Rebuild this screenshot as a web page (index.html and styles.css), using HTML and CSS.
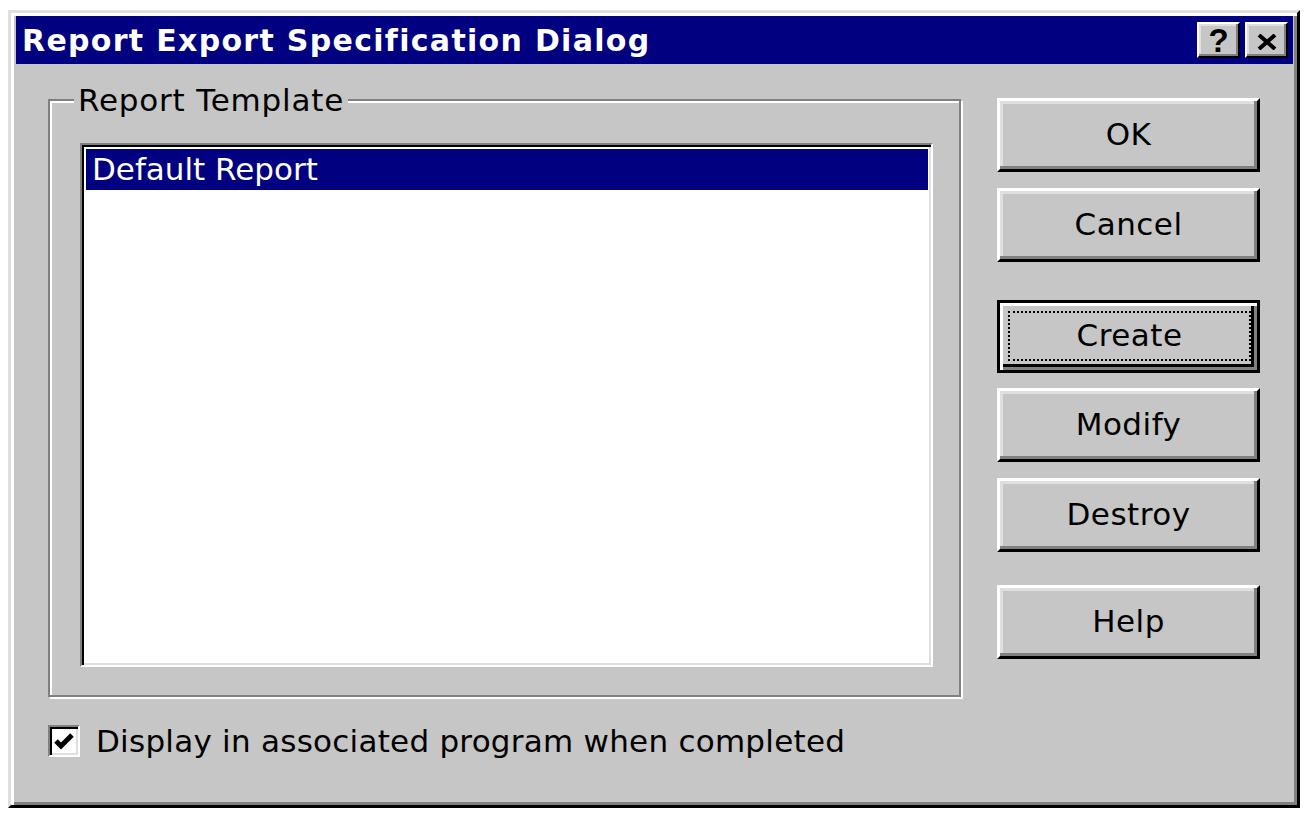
FILE: index.html
```html
<!DOCTYPE html>
<html>
<head>
<meta charset="utf-8">
<title>Report Export Specification Dialog</title>
<link rel="stylesheet" href="styles.css">
</head>
<body>
<div class="window">
  <div class="titlebar">
    <span class="title">Report Export Specification Dialog</span>
    <div class="title-buttons">
      <button class="tbtn help-btn">?</button>
      <button class="tbtn close-btn"><svg width="20" height="16" viewBox="0 0 20 16"><path d="M2 1 L18 15 M18 1 L2 15" stroke="#000" stroke-width="4" fill="none"/></svg></button>
    </div>
  </div>
  <div class="body">
    <div class="left-col">
      <fieldset class="group">
        <legend class="group-label">Report Template</legend>
        <div class="listbox">
          <div class="list-item selected">Default Report</div>
        </div>
      </fieldset>
      <label class="check-row">
        <span class="checkbox"><svg width="22" height="20" viewBox="0 0 22 20"><path d="M3 9 L8 14 L19 3" stroke="#000" stroke-width="5" fill="none"/></svg></span>
        <span class="check-label">Display in associated program when completed</span>
      </label>
    </div>
    <div class="right-col">
      <button class="btn btn-ok">OK</button>
      <button class="btn btn-cancel">Cancel</button>
      <button class="btn btn-default btn-create"><span class="focus">Create</span></button>
      <button class="btn btn-modify">Modify</button>
      <button class="btn btn-destroy">Destroy</button>
      <button class="btn btn-help">Help</button>
    </div>
  </div>
</div>
</body>
</html>
```

FILE: styles.css
```css
* { box-sizing: border-box; }
html, body { margin: 0; padding: 0; background: #ffffff; }
body {
  font-family: "DejaVu Sans", "Liberation Sans", sans-serif;
  width: 1311px;
  height: 818px;
  overflow: hidden;
}
.window {
  margin: 10px 0 0 8px;
  width: 1292px;
  height: 798px;
  background: #c6c6c6;
  border: 3px solid;
  border-color: #dfdfdf #000 #000 #dfdfdf;
  box-shadow: inset 3px 3px 0 #fff, inset -3px -3px 0 #808080;
  padding: 3px 4px 0 5px;
  display: flex;
  flex-direction: column;
}
.titlebar {
  height: 48px;
  background: #000080;
  display: flex;
  align-items: center;
  justify-content: space-between;
  padding: 0 5px 0 6px;
}
.title {
  color: #fff;
  font-weight: bold;
  font-size: 30px;
  letter-spacing: 1.3px;
}
.title-buttons { display: flex; gap: 5px; }
.tbtn {
  width: 43px;
  height: 36px;
  background: #c6c6c6;
  border: 2px solid;
  border-color: #fff #000 #000 #fff;
  box-shadow: inset -2px -2px 0 #808080, inset 2px 2px 0 #dfdfdf;
  padding: 0;
  margin: 0;
  display: flex;
  align-items: center;
  justify-content: center;
  font-family: "Liberation Sans", Arial, sans-serif;
  font-weight: bold;
  font-size: 33px;
  color: #000;
}
.help-btn { padding-top: 2px; }
.close-btn { padding-top: 4px; }
.body {
  flex: 1;
  display: flex;
  padding: 17px 0 0 32px;
}
.left-col {
  display: flex;
  flex-direction: column;
}
.group {
  margin: 0;
  width: 913px;
  border: 2px solid #808080;
  box-shadow: inset 2px 2px 0 #fff, 2px 2px 0 #fff;
  padding: 24px 26px 28px 30px;
}
.group-label {
  margin-left: -6px;
  padding: 0 4px 0 4px;
  font-size: 31px;
  line-height: 38px;
  letter-spacing: 0.8px;
  color: #000;
  background: #c6c6c6;
}
.listbox {
  width: 853px;
  height: 524px;
  background: #fff;
  border: 2px solid;
  border-color: #808080 #fff #fff #808080;
  box-shadow: inset 2px 2px 0 #000, inset -2px -2px 0 #dfdfdf;
  padding: 4px 3px 0 4px;
}
.list-item {
  height: 41px;
  font-size: 31px;
  line-height: 41px;
  padding-left: 6px;
  color: #000;
}
.list-item.selected {
  background: #000080;
  color: #fff;
}
.check-row {
  display: flex;
  align-items: center;
  margin-top: 26px;
  gap: 16px;
}
.checkbox {
  width: 32px;
  height: 32px;
  background: #fff;
  border: 2px solid;
  border-color: #808080 #fff #fff #808080;
  box-shadow: inset 2px 2px 0 #000, inset -2px -2px 0 #dfdfdf;
  display: flex;
  align-items: center;
  justify-content: center;
  padding-top: 1px;
}
.check-label {
  font-size: 31px;
  letter-spacing: 0.25px;
  color: #000;
}
.right-col {
  display: flex;
  flex-direction: column;
  margin-left: 36px;
  padding-top: 17px;
}
.btn {
  width: 263px;
  height: 74px;
  background: #c6c6c6;
  border: 3px solid;
  border-color: #fff #000 #000 #fff;
  box-shadow: inset -3px -3px 0 #808080, inset 3px 3px 0 #dfdfdf;
  font-family: "DejaVu Sans", "Liberation Sans", sans-serif;
  font-size: 31px;
  letter-spacing: 0.5px;
  color: #000;
  padding: 0 0 2px 0;
  margin: 0;
  display: flex;
  align-items: center;
  justify-content: center;
}
.btn-cancel { margin-top: 16px; }
.btn-create { margin-top: 38px; }
.btn-modify { margin-top: 15px; }
.btn-destroy { margin-top: 16px; }
.btn-help { margin-top: 33px; }
.btn-default {
  height: 73px;
  border: 3px solid #000;
  box-shadow: inset 3px 3px 0 #fff, inset -3px -3px 0 #808080, inset -6px -6px 0 #000;
  padding: 8px 6px 9px 8px;
}
.focus {
  flex: 1;
  align-self: stretch;
  display: flex;
  align-items: center;
  justify-content: center;
  padding: 0 0 2px 0;
  border: 2px dotted #000;
}
```
